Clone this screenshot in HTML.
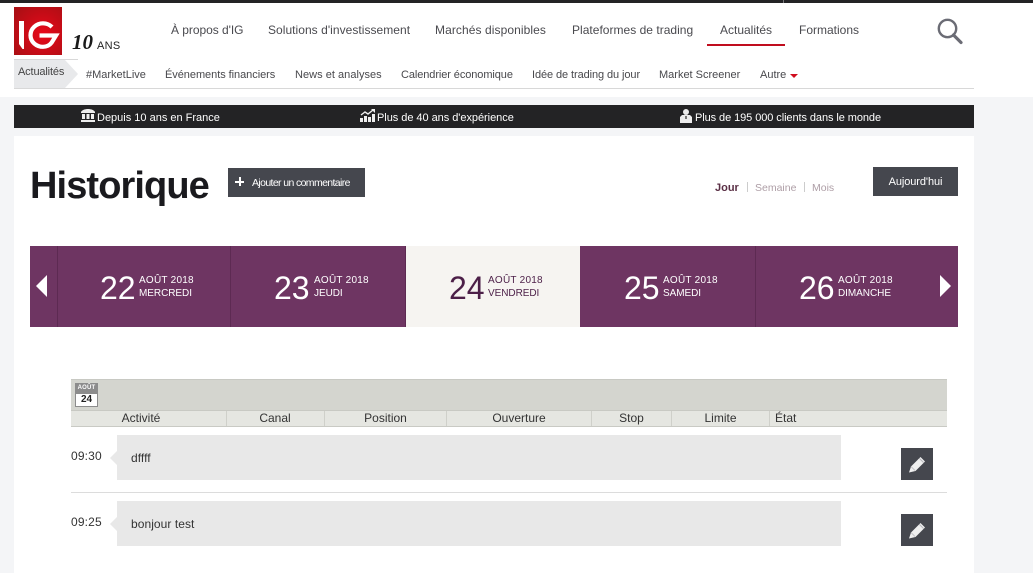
<!DOCTYPE html>
<html lang="fr"><head><meta charset="utf-8"><title>Historique</title>
<style>
html,body{margin:0;padding:0}
body{width:1033px;height:573px;overflow:hidden;position:relative;background:#f4f5f7;font-family:"Liberation Sans",sans-serif;color:#333}
.a{position:absolute;white-space:nowrap}
.n{font-size:12px;color:#4a4a4f;top:23px;line-height:14px}
.s{font-size:11px;color:#48484c;top:69px;line-height:13px}
.b{font-size:11px;color:#fff;top:112px;line-height:13px}
.d{position:absolute;top:246px;height:81px;background:#6e3562;color:#fff;border-right:1px solid #5d2a52;box-sizing:border-box}
.d b{position:absolute;font-weight:normal;font-size:32px;line-height:32px;top:26px}
.d i{position:absolute;font-style:normal;font-size:10px;line-height:13px;top:28px;white-space:nowrap;letter-spacing:.25px}
.d u{position:absolute;text-decoration:none;font-size:10px;line-height:13px;top:41px;white-space:nowrap;letter-spacing:-.05px}
.h{position:absolute;top:411px;height:15px;line-height:15px;font-size:12px;color:#333;text-align:center;border-right:1px solid #cfd0ca;box-sizing:border-box}
.c{position:absolute;left:117px;width:724px;height:45px;background:#e8e8e8;font-size:12px;color:#333;line-height:46px;text-indent:14px;letter-spacing:.06px}
.t{position:absolute;left:71px;font-size:12px;color:#333;line-height:14px;letter-spacing:.15px}
.ar{position:absolute;left:110px;width:0;height:0;border:7px solid transparent;border-left:0;border-right-color:#e8e8e8}
.e{position:absolute;left:901px;width:32px;height:32px;background:#45474e}
</style></head><body>
<div class="a" style="left:0;top:0;width:1033px;height:3px;background:#232325"></div>
<div class="a" style="left:783px;top:0;width:1px;height:3px;background:#77777a"></div>
<div class="a" style="left:0;top:3px;width:1033px;height:94px;background:#fff"></div>

<svg class="a" style="left:14px;top:7px" width="48" height="48" viewBox="0 0 48 48"><defs><radialGradient id="g" cx=".6" cy=".55" r=".75"><stop offset="0" stop-color="#e8091a"/><stop offset="1" stop-color="#a90f14"/></radialGradient></defs><rect width="48" height="48" fill="url(#g)"/><path d="M5 14h5v28H8.500L5 37z" fill="#fff"/><path d="M38 20C35.500 17.500 32.500 16.300 29 16.300 22.300 16.300 16.500 21.500 16.500 28.200S22.300 39.800 29 39.800c3.500 0 6.500-1.300 8.500-4L42 28.500H25.500" fill="none" stroke="#fff" stroke-width="4.200"/></svg>
<div class="a" style="left:72px;top:29px;font:italic bold 21px/26px 'Liberation Serif',serif;color:#1a1a1a">10</div>
<div class="a" style="left:97px;top:40px;font-size:11px;line-height:13px;color:#222;letter-spacing:.3px">ANS</div>

<div class="a n" style="left:171px;letter-spacing:-.04px">À propos d'IG</div>
<div class="a n" style="left:268px;letter-spacing:.04px">Solutions d'investissement</div>
<div class="a n" style="left:435px;letter-spacing:.08px">Marchés disponibles</div>
<div class="a n" style="left:572px;letter-spacing:.02px">Plateformes de trading</div>
<div class="a n" style="left:720px">Actualités</div>
<div class="a n" style="left:799px">Formations</div>
<div class="a" style="left:707px;top:44px;width:78px;height:2px;background:#c00d1e"></div>

<svg class="a" style="left:936px;top:17px" width="28" height="28" viewBox="0 0 28 28"><circle cx="11.500" cy="11.500" r="8.700" fill="none" stroke="#6b6c75" stroke-width="2.400"/><path d="M17.500 18l7.500 7.500" stroke="#6b6c75" stroke-width="3.200" stroke-linecap="round"/></svg>

<div class="a" style="left:14px;top:88px;width:960px;height:1px;background:#d8d8d8"></div>
<div class="a" style="left:14px;top:59px;width:64px;height:1px;background:#d8d8d8"></div>
<svg class="a" style="left:14px;top:60px" width="66" height="28"><path d="M0 0H51L64 14 51 28H0z" fill="#e8e9eb"/></svg>
<div class="a" style="left:18px;top:66px;font-size:11px;line-height:12px;color:#444;letter-spacing:-.15px">Actualités</div>
<div class="a s" style="left:86px">#MarketLive</div>
<div class="a s" style="left:165px;letter-spacing:-.05px">Événements financiers</div>
<div class="a s" style="left:295px;letter-spacing:.03px">News et analyses</div>
<div class="a s" style="left:401px;letter-spacing:-.09px">Calendrier économique</div>
<div class="a s" style="left:532px;letter-spacing:-.09px">Idée de trading du jour</div>
<div class="a s" style="left:659px">Market Screener</div>
<div class="a s" style="left:760px">Autre</div>
<div class="a" style="left:790px;top:74px;width:0;height:0;border:4px solid transparent;border-top:4px solid #d00d1e;border-bottom:0"></div>

<div class="a" style="left:14px;top:105px;width:960px;height:23px;background:#232325"></div>
<svg class="a" style="left:81px;top:109px" width="14" height="13" viewBox="0 0 14 13"><path d="M7 0C10 0 13 1 14 3V4H0V3C1 1 4 0 7 0z" fill="#eee"/><path d="M1 5h3v5H1zM5.500 5h3v5h-3zM10 5h3v5h-3zM0 11h14v2H0z" fill="#eee"/></svg>
<div class="a b" style="left:97px">Depuis 10 ans en France</div>
<svg class="a" style="left:360px;top:109px" width="15" height="13" viewBox="0 0 15 13"><path d="M0 9h3v4H0zM4 7h3v6H4zM8 8h3v5H8zM12 5h3v8h-3z" fill="#eee"/><path d="M1 6l4-3 3 2 5-4" stroke="#eee" stroke-width="1.400" fill="none"/><path d="M11 0h4v4z" fill="#eee"/></svg>
<div class="a b" style="left:377px;letter-spacing:-.04px">Plus de 40 ans d'expérience</div>
<svg class="a" style="left:680px;top:109px" width="12" height="14" viewBox="0 0 12 14"><circle cx="6" cy="3" r="3" fill="#eee"/><path d="M0 14V8l2-2h8l2 2v6z" fill="#eee"/><path d="M5 7h2v3H5z" fill="#777"/></svg>
<div class="a b" style="left:695px;letter-spacing:-.08px">Plus de 195 000 clients dans le monde</div>

<div class="a" style="left:14px;top:136px;width:960px;height:437px;background:#fff"></div>

<div class="a" style="left:30px;top:164px;font-size:38px;font-weight:bold;line-height:44px;color:#1a1a1e;letter-spacing:-.9px">Historique</div>
<div class="a" style="left:228px;top:168px;width:137px;height:29px;background:#45474e"></div>
<div class="a" style="left:235px;top:181px;width:9px;height:2px;background:#fff"></div>
<div class="a" style="left:239px;top:177px;width:2px;height:9px;background:#fff"></div>
<div class="a" style="left:252px;top:177px;font-size:10.500px;line-height:13px;color:#fff;letter-spacing:-.62px">Ajouter un commentaire</div>

<div class="a" style="left:715px;top:182px;font-size:11px;line-height:13px;font-weight:bold;color:#5a2f45">Jour</div>
<div class="a" style="left:747px;top:182px;width:1px;height:10px;background:#ccc"></div>
<div class="a" style="left:755px;top:182px;font-size:10.500px;line-height:13px;color:#ae9ea6">Semaine</div>
<div class="a" style="left:804px;top:182px;width:1px;height:10px;background:#ccc"></div>
<div class="a" style="left:812px;top:182px;font-size:10.500px;line-height:13px;color:#ae9ea6">Mois</div>
<div class="a" style="left:873px;top:167px;width:85px;height:29px;background:#45474e;color:#fff;font-size:11px;line-height:31px;text-align:center;letter-spacing:-.08px">Aujourd'hui</div>

<div class="d" style="left:30px;width:28px"></div>
<div class="a" style="left:36px;top:275px;width:0;height:0;border:11px solid transparent;border-left:0;border-right:11px solid #fff"></div>
<div class="d" style="left:58px;width:173px"><b style="left:42px">22</b><i style="left:81px">AOÛT 2018</i><u style="left:81px">MERCREDI</u></div>
<div class="d" style="left:231px;width:175px"><b style="left:43px">23</b><i style="left:83px">AOÛT 2018</i><u style="left:83px">JEUDI</u></div>
<div class="d" style="left:406px;width:174px;background:#f6f4f1;color:#4c1f48;border:0"><b style="left:43px">24</b><i style="left:82px">AOÛT 2018</i><u style="left:82px">VENDREDI</u></div>
<div class="d" style="left:580px;width:176px"><b style="left:44px">25</b><i style="left:83px">AOÛT 2018</i><u style="left:83px">SAMEDI</u></div>
<div class="d" style="left:756px;width:202px;border:0"><b style="left:43px">26</b><i style="left:82px">AOÛT 2018</i><u style="left:82px">DIMANCHE</u></div>
<div class="a" style="left:940px;top:275px;width:0;height:0;border:11px solid transparent;border-right:0;border-left:11px solid #fff"></div>

<div class="a" style="left:71px;top:379px;width:876px;height:32px;background:#d4d5cf;border-top:1px solid #c8c9c3;border-bottom:1px solid #c8c9c3;box-sizing:border-box"></div>
<div class="a" style="left:71px;top:411px;width:876px;height:16px;background:#e5e6e1;border-bottom:1px solid #c9cac4;box-sizing:border-box"></div>
<div class="a" style="left:75px;top:383px;width:23px;height:24px;background:#fff;border:1px solid #8c8c8c;box-sizing:border-box"></div>
<div class="a" style="left:75px;top:383px;width:23px;height:11px;background:#8c8c8c;color:#fff;font-size:6px;font-weight:bold;line-height:11px;text-align:center;letter-spacing:.2px">AOÛT</div>
<div class="a" style="left:75px;top:394px;width:23px;font-size:10px;font-weight:bold;line-height:12px;text-align:center;color:#222">24</div>
<div class="h" style="left:71px;width:156px;text-indent:-15px">Activité</div>
<div class="h" style="left:227px;width:98px;text-indent:-1px">Canal</div>
<div class="h" style="left:325px;width:122px">Position</div>
<div class="h" style="left:447px;width:145px">Ouverture</div>
<div class="h" style="left:592px;width:80px">Stop</div>
<div class="h" style="left:672px;width:98px">Limite</div>
<div class="h" style="left:775px;width:30px;border:0;text-align:left">État</div>

<div class="t" style="top:449px">09:30</div>
<div class="ar" style="top:451px"></div>
<div class="c" style="top:435px">dffff</div>
<div class="e" style="top:448px"><svg width="32" height="32" viewBox="0 0 32 32"><path d="M8 24.500l2-6L19.500 9l4.500 4.500L14.500 23z" fill="#efefef"/><path d="M18.500 10.500l4 4" stroke="#b8b8bc" stroke-width="1"/><path d="M10 18.500l4 4" stroke="#c4c4c8" stroke-width="1"/></svg></div>
<div class="a" style="left:71px;top:492px;width:876px;height:1px;background:#dcdcdc"></div>
<div class="t" style="top:515px">09:25</div>
<div class="ar" style="top:517px"></div>
<div class="c" style="top:501px">bonjour test</div>
<div class="e" style="top:514px"><svg width="32" height="32" viewBox="0 0 32 32"><path d="M8 24.500l2-6L19.500 9l4.500 4.500L14.500 23z" fill="#efefef"/><path d="M18.500 10.500l4 4" stroke="#b8b8bc" stroke-width="1"/><path d="M10 18.500l4 4" stroke="#c4c4c8" stroke-width="1"/></svg></div>
</body></html>
